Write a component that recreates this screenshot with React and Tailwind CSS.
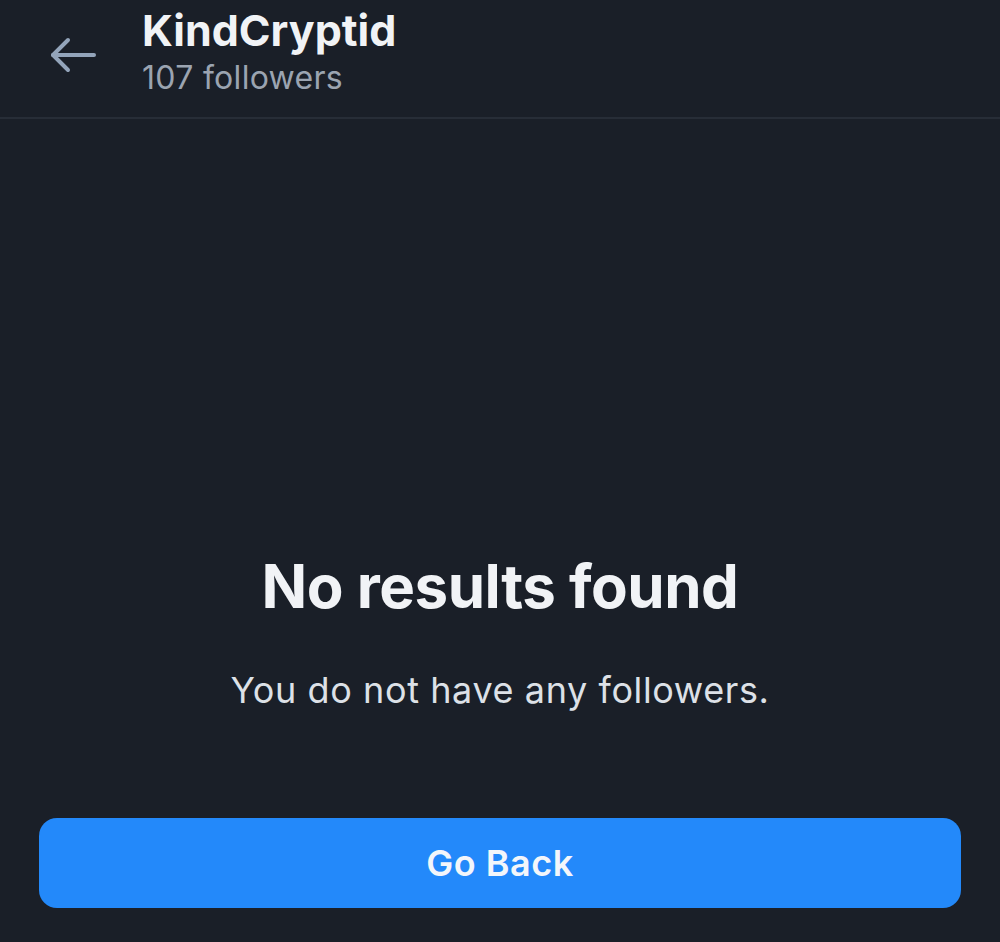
export default function App() {
  return (
    <div
      className="flex h-screen w-full flex-col bg-[#1a1f28] text-[#f1f3f6]"
      style={{ fontFamily: "Inter, 'Noto Sans', sans-serif" }}
    >
      {/* header */}
      <header className="flex h-[119px] items-start border-b-2 border-[#272d37]">
        <button type="button" className="ml-[49px] mt-[36px] flex items-center text-[#93a4ba]">
          <svg width="48" height="38" viewBox="0 0 48 38" fill="none" stroke="currentColor" strokeWidth="4" strokeLinecap="round" strokeLinejoin="round">
            <path d="M45 19H4" />
            <path d="M19 4L4 19L19 34" />
          </svg>
        </button>
        <div className="ml-[45px] mt-[6px] flex flex-col">
          <h1 className="text-[43px] font-bold leading-[48px]">KindCryptid</h1>
          <p className="mt-[6px] text-[32px] leading-[36px] tracking-[0.3px] text-[#9ba4b1]">107 followers</p>
        </div>
      </header>

      {/* empty state */}
      <main className="flex flex-1 flex-col items-center pt-[431px] text-center">
        <h2 className="text-[60px] font-bold leading-[72px] tracking-[-0.5px]">No results found</h2>
        <p className="mt-[46px] text-[36px] leading-[44px] tracking-[0.6px] text-[#dde1e7]">You do not have any followers.</p>
      </main>

      <div className="px-[39px] pb-[34px]">
        <button
          type="button"
          className="flex h-[90px] w-full items-center justify-center rounded-[18px] bg-[#2389fa] text-[36px] font-semibold tracking-[0.5px] text-[#f3f6fa]"
        >
          Go Back
        </button>
      </div>
    </div>
  );
}
